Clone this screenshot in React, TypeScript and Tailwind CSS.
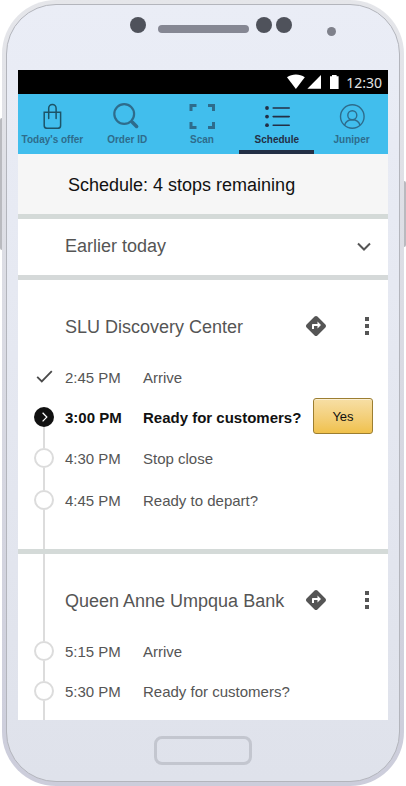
import React, { useState } from "react";
import { MdDirections } from "react-icons/md";

type StepStatus = "done" | "current" | "pending";

interface Step {
  time: string;
  label: string;
  status: StepStatus;
  action?: string;
}

interface Stop {
  name: string;
  steps: Step[];
}

const stops: Stop[] = [
  {
    name: "SLU Discovery Center",
    steps: [
      { time: "2:45 PM", label: "Arrive", status: "done" },
      { time: "3:00 PM", label: "Ready for customers?", status: "current", action: "Yes" },
      { time: "4:30 PM", label: "Stop close", status: "pending" },
      { time: "4:45 PM", label: "Ready to depart?", status: "pending" },
    ],
  },
  {
    name: "Queen Anne Umpqua Bank",
    steps: [
      { time: "5:15 PM", label: "Arrive", status: "pending" },
      { time: "5:30 PM", label: "Ready for customers?", status: "pending" },
    ],
  },
];

const BagIcon = () => (
  <svg width="26" height="26" viewBox="0 0 26 26" fill="none" stroke="#1d5468" strokeWidth="1.5">
    <path d="M5.2 9.2h16.4v13.3a2.8 2.8 0 0 1-2.8 2.8H8a2.8 2.8 0 0 1-2.8-2.8z" />
    <path d="M9.7 15.6V5.2a3.7 3.7 0 0 1 7.4 0v10.4" strokeLinecap="round" />
  </svg>
);

const SearchIcon = () => (
  <svg width="28" height="26" viewBox="0 0 28 26" fill="none" stroke="#2e6c8c">
    <circle cx="11.2" cy="11" r="9.9" strokeWidth="2.2" />
    <path d="M18.2 18l1.8 1.8" strokeWidth="2.4" />
    <path d="M19.6 19.4l4 4" strokeWidth="3.6" strokeLinecap="round" />
  </svg>
);

const ScanIcon = () => (
  <svg width="26" height="26" viewBox="0 0 26 26" fill="none" stroke="#2e6c8c" strokeWidth="3">
    <path d="M2 8V2.5H7.5M19 2.5H24.5V8M24.5 19V24.5H19M7.5 24.5H2V19" />
  </svg>
);

const ListIcon = () => (
  <svg width="26" height="26" viewBox="0 0 26 26">
    <g fill="#232f45">
      <circle cx="3" cy="5" r="1.9" />
      <circle cx="3" cy="13.6" r="1.9" />
      <circle cx="3" cy="22.2" r="1.9" />
    </g>
    <path d="M9.2 5H25.2M9.2 13.6H25.2M9.2 22.2H25.2" stroke="#232f45" strokeWidth="1.6" strokeLinecap="round" />
  </svg>
);

const ProfileIcon = () => (
  <svg width="26" height="26" viewBox="0 0 26 26" fill="none" stroke="#2e6c8c" strokeWidth="1.4">
    <circle cx="13.3" cy="13.5" r="11.8" />
    <circle cx="13.3" cy="12.2" r="4.5" />
    <path d="M5.6 22.2c1-3.2 3.4-5.4 7.7-5.4s6.700 2.200 7.700 5.400" />
  </svg>
);

const tabs = [
  { label: "Today's offer", icon: <BagIcon /> },
  { label: "Order ID", icon: <SearchIcon /> },
  { label: "Scan", icon: <ScanIcon /> },
  { label: "Schedule", icon: <ListIcon /> },
  { label: "Juniper", icon: <ProfileIcon /> },
];

const StatusBar = () => (
  <div className="flex h-6 items-center justify-end bg-black pr-[6px] text-white">
    <svg width="54" height="16" viewBox="0 0 54 16" fill="#fff">
      <path d="M0 3.2C5.2-.4 12.600-.4 17.800 3.200L8.900 15z" />
      <path d="M34 1v13.8H20.4z" />
      <path d="M43 2.2h2V1h4.6v1.2h2V15H43z" />
    </svg>
    <span className="ml-[5px] pt-0.5 font-['Noto_Sans','Open_Sans',sans-serif] text-[14px] leading-[22px] text-[#e4e4e4]">
      12:30
    </span>
  </div>
);

const StepMarker = ({ status }: { status: StepStatus }) => {
  if (status === "done") {
    return (
      <svg width="20" height="20" viewBox="0 0 20 20" fill="none" stroke="#4a4a4a" strokeWidth="1.8">
        <path d="M3.2 9.8l4.6 4.6L17.8 4.2" />
      </svg>
    );
  }
  if (status === "current") {
    return (
      <svg width="20" height="20" viewBox="0 0 20 20" fill="none">
        <circle cx="10" cy="10" r="10" fill="#111" />
        <path d="M8.6 5.8l4.2 4.3-4.2 4.3" stroke="#fff" strokeWidth="1.3" />
      </svg>
    );
  }
  return <span className="h-5 w-5 rounded-full border-2 border-[#dcdcdc] bg-white" />;
};

// Vertical segment of the timeline
const Line = ({ visible }: { visible: boolean }) => (
  <span className={`w-0.5 flex-1 ${visible ? "bg-[#dcdcdc]" : "bg-transparent"}`} />
);

const StopCard = ({ stop, index }: { stop: Stop; index: number }) => {
  const isLast = index === stops.length - 1;

  return (
    <section className={isLast ? "flex flex-1 flex-col" : "border-b-5 border-[#d4dad8]"}>
      <div className="flex pl-4">
        <div className="flex w-5 flex-col items-center">
          <Line visible={index > 0} />
        </div>
        <div className="flex flex-1 items-center pt-[26px] pr-[11px] pb-[11px] pl-[11px]">
          <h2 className="flex-1 pt-0.5 text-lg leading-[38px] whitespace-nowrap">{stop.name}</h2>
          <button type="button" aria-label="Directions" className="mr-[29px]">
            <MdDirections size={24} />
          </button>
          <button type="button" aria-label="More options" className="flex w-5 justify-center">
            <svg width="4" height="18" viewBox="0 0 4 18" fill="currentColor">
              <path d="M0 0h4v4H0zM0 7h4v4H0zM0 14h4v4H0z" />
            </svg>
          </button>
        </div>
      </div>

      <ul>
        {stop.steps.map((step, i) => {
          const isCurrent = step.status === "current";
          return (
            <li
              key={step.time}
              className={`flex pr-[15px] pl-4 text-[15px] ${
                isCurrent ? "font-bold text-[#111]" : ""
              } ${index === 0 && i > 1 ? "h-[42px]" : "h-10"}`}
            >
              <div className="flex w-5 flex-col items-center">
                <Line visible={step.status === "pending"} />
                <StepMarker status={step.status} />
                <Line visible={step.status !== "done"} />
              </div>
              <div className="flex flex-1 items-center pt-0.5 pl-[11px]">
                <time className="w-[78px]">{step.time}</time>
                <span className="flex-1 whitespace-nowrap">{step.label}</span>
                {step.action && (
                  <button
                    type="button"
                    className="mb-1 h-9 w-[60px] rounded-[3px] border border-[#9c7e31] bg-linear-to-b from-[#f7dfa5] to-[#f0c14b] pt-0.5 text-[13px] font-normal shadow-[inset_0_1px_0_rgba(255,255,255,0.5)]"
                  >
                    {step.action}
                  </button>
                )}
              </div>
            </li>
          );
        })}
      </ul>

      <div className={`flex pl-4 ${isLast ? "min-h-[9px] flex-1" : "h-7"}`}>
        <div className="flex w-5 flex-col items-center">
          <Line visible />
        </div>
      </div>
    </section>
  );
};

const App = () => {
  const [activeTab, setActiveTab] = useState("Schedule");

  return (
    <div className="relative flex min-h-screen flex-col bg-white px-0.5 font-['Liberation_Sans',Arial,sans-serif] text-[#555]">
      {/* Side keys of the phone */}
      <div className="absolute top-[118px] left-0 h-[132px] w-0.5 rounded-l-sm bg-[#b9babf]" />
      <div className="absolute top-[181px] right-0 h-[66px] w-0.5 rounded-r-sm bg-[#b9babf]" />

      <div className="flex flex-1 flex-col rounded-[54px] bg-linear-to-b from-[#e5e6ea] to-[#cccddb] p-1">
        <div className="flex flex-1 flex-col rounded-[50px] border border-[#b3b5bc] bg-linear-to-b from-[#eaedf6] to-[#dfe2eb] px-[11px]">
          <div className="flex h-[65px] items-start justify-center pt-3 pl-[59px]">
            <span className="h-4 w-4 rounded-full bg-[#4f525b]" />
            <span className="mt-2 ml-3 h-2 w-[91px] rounded-full bg-[#858793]" />
            <span className="ml-[7px] h-4 w-4 rounded-full bg-[#4f525b]" />
            <span className="ml-1 h-4 w-4 rounded-full bg-[#4f525b]" />
            <span className="mt-[10px] ml-[35px] h-[9px] w-[9px] rounded-full bg-[#7f818b]" />
          </div>

          <div className="flex flex-1 flex-col overflow-hidden bg-white">
            <StatusBar />

            <nav className="bg-[#41beed]">
              <div className="-mr-px -ml-[3px] grid grid-cols-5">
                {tabs.map((tab) => {
                  const isActive = tab.label === activeTab;
                  return (
                    <button
                      key={tab.label}
                      type="button"
                      onClick={() => setActiveTab(tab.label)}
                      className={`flex h-[60px] flex-col items-center border-b-4 pt-[9px] text-[10px] font-bold whitespace-nowrap ${
                        isActive
                          ? "border-[#232f45] text-[#232f45]"
                          : "border-transparent text-[#2e6c8c]"
                      }`}
                    >
                      {tab.icon}
                      <span className="mt-[5px] leading-3">{tab.label}</span>
                    </button>
                  );
                })}
              </div>
            </nav>

            <h1 className="border-b-5 border-[#d4dad8] bg-[#f6f6f6] pt-[3px] pl-[50px] text-lg leading-[57px] whitespace-nowrap text-[#111]">
              Schedule: 4 stops remaining
            </h1>

            <button
              type="button"
              className="flex h-[61px] shrink-0 items-center border-b-5 border-[#d5d9d9] pr-[17px] pl-[47px] text-left text-lg"
            >
              <span className="flex-1 pb-0.5">Earlier today</span>
              <svg width="14" height="10" viewBox="0 0 14 10" fill="none" stroke="#555" strokeWidth="2">
                <path d="M1 1.500l6 6 6-6" />
              </svg>
            </button>

            {stops.map((stop, index) => (
              <StopCard key={stop.name} stop={stop} index={index} />
            ))}
          </div>

          <div className="flex justify-center py-4">
            <button
              type="button"
              aria-label="Home"
              className="h-[29px] w-[98px] rounded-lg border-3 border-[#c3c6cf]"
            />
          </div>
        </div>
      </div>
    </div>
  );
};

export default App;
